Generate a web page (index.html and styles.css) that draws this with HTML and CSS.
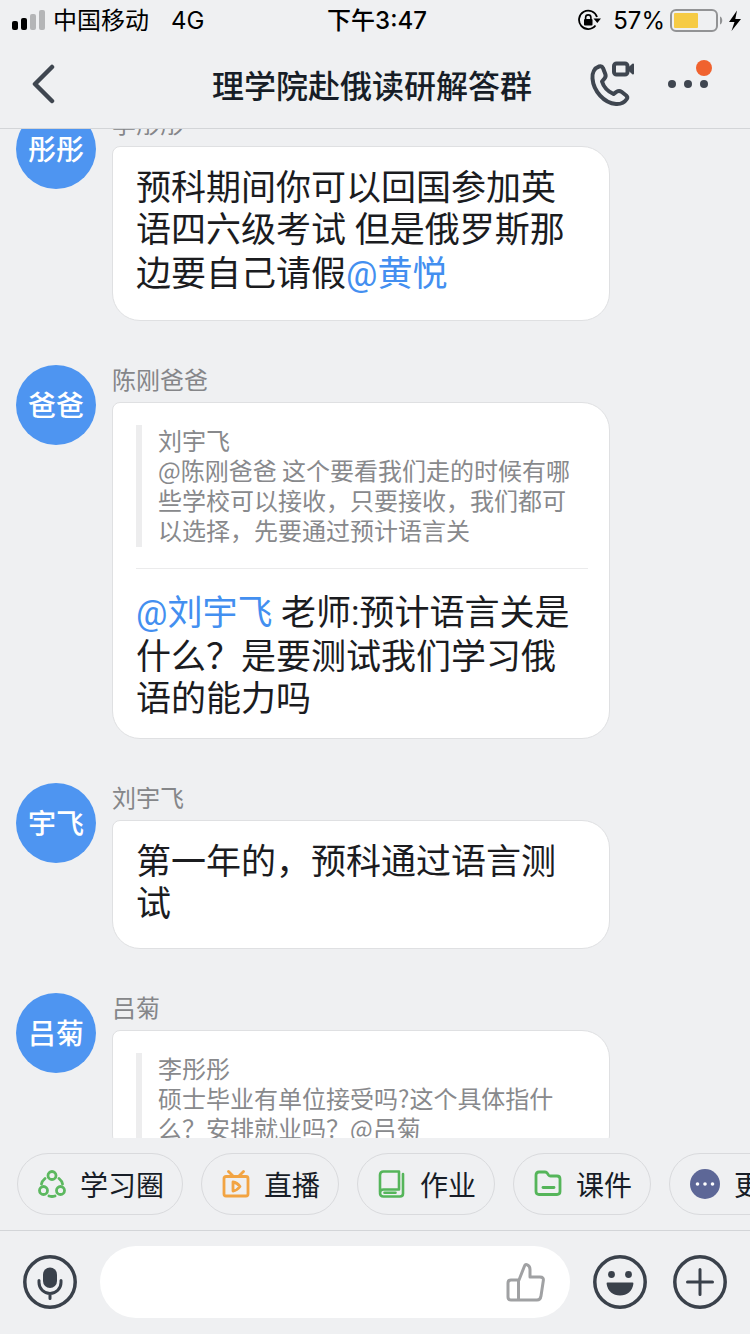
FILE: index.html
```html
<!DOCTYPE html>
<html lang="zh-CN">
<head>
<meta charset="utf-8">
<meta name="viewport" content="width=device-width, initial-scale=1">
<title>理学院赴俄读研解答群</title>
<link rel="stylesheet" href="styles.css">
</head>
<body>
<div class="app">
  <div class="status">
    <div class="status-left">
      <svg class="signal" viewBox="0 0 34 22" width="34" height="22" aria-hidden="true">
        <rect x="0" y="12" width="6" height="9" rx="2" fill="#000"/>
        <rect x="9" y="9" width="6" height="12" rx="2" fill="#000"/>
        <rect x="18" y="5" width="6" height="16" rx="2" fill="#b4b5b7"/>
        <rect x="27" y="1" width="6" height="20" rx="2" fill="#b4b5b7"/>
      </svg>
      <span class="status-text carrier">中国移动</span>
      <span class="status-text">4G</span>
    </div>
    <div class="status-text clock">下午3:47</div>
    <div class="status-right">
      <svg class="lock" viewBox="0 0 24 22" width="24" height="22" aria-hidden="true">
        <path d="M20 8A9.200 9.200 0 1 0 18.500 16.500" fill="none" stroke="#000" stroke-width="1.800"/>
        <path d="M16.500 9.500h7.500l-3.700 4.500z" fill="#000"/>
        <rect x="7" y="10" width="8.500" height="6.500" rx="1" fill="#000"/>
        <path d="M8.600 10.500V8.500a2.650 2.650 0 0 1 5.300 0v2" fill="none" stroke="#000" stroke-width="1.600"/>
      </svg>
      <span class="status-text percent">57%</span>
      <svg class="battery" viewBox="0 0 72 24" width="72" height="24" aria-hidden="true">
        <rect x="1" y="2" width="46" height="21" rx="5" fill="none" stroke="#929395" stroke-width="2"/>
        <rect x="4" y="5" width="24" height="15" rx="1" fill="#f6cb45"/>
        <path d="M50 8.500c3 1 3 7 0 8z" fill="#929395"/>
        <path d="M67 2.500L59 14h5.500l-3 9L71 11h-5.700z" fill="#000"/>
      </svg>
    </div>
  </div>

  <header class="nav">
    <button class="icon-button back" aria-label="返回">
      <svg viewBox="0 0 24 40" width="24" height="40"><path d="M20 3L3 20l17 17" fill="none" stroke="#3f4650" stroke-width="4.500" stroke-linecap="round" stroke-linejoin="round"/></svg>
    </button>
    <h1 class="title">理学院赴俄读研解答群</h1>
    <div class="nav-actions">
      <button class="icon-button" aria-label="通话">
        <svg viewBox="0 0 46 46" width="46" height="46" fill="none" stroke="#3f4650" stroke-width="4" stroke-linejoin="round" stroke-linecap="round">
          <path d="M9 5.500C4.500 7 2 12 2.500 17.500 3.500 30 14 42 26 43c4.500.3 8.500-1.500 10.800-5 .8-1.300.5-2.500-.6-3.500l-4.700-3.700c-1.500-1.100-3.200-1.100-4.700-.1L23.500 33C18 30.500 13.500 25.500 12 20.500l2.500-3c1.200-1.400 1.500-2.700.8-4.500L13 7C12.200 5.300 10.800 4.900 9 5.500z"/>
          <rect x="24" y="2.500" width="13.500" height="11" rx="2.500"/>
          <path d="M38 8l5-4.500v9z" fill="#3f4650" stroke-width="2"/>
        </svg>
      </button>
      <button class="icon-button" aria-label="更多选项">
        <svg viewBox="0 0 46 50" width="46" height="50">
          <g fill="#3f4650"><circle cx="6" cy="25" r="4"/><circle cx="22" cy="25" r="4"/><circle cx="38" cy="25" r="4"/></g>
          <circle cx="38" cy="9" r="8" fill="#f0622f"/>
        </svg>
      </button>
    </div>
  </header>

  <main class="chat">
    <div class="messages">
      <article class="message">
        <div class="avatar">彤彤</div>
        <div class="content">
          <div class="sender">李彤彤</div>
          <div class="bubble"><p class="text">预科期间你可以回国参加英语四六级考试 但是俄罗斯那边要自己请假<a class="mention" href="#">@黄悦</a></p></div>
        </div>
      </article>
      <article class="message">
        <div class="avatar">爸爸</div>
        <div class="content">
          <div class="sender">陈刚爸爸</div>
          <div class="bubble bubble-reply">
            <blockquote class="quote"><div>刘宇飞</div><div>@陈刚爸爸 这个要看我们走的时候有哪些学校可以接收，只要接收，我们都可以选择，先要通过预计语言关</div></blockquote>
            <p class="text"><a class="mention" href="#">@刘宇飞</a> 老师:预计语言关是什么？是要测试我们学习俄语的能力吗</p>
          </div>
        </div>
      </article>
      <article class="message">
        <div class="avatar">宇飞</div>
        <div class="content">
          <div class="sender">刘宇飞</div>
          <div class="bubble"><p class="text">第一年的，预科通过语言测试</p></div>
        </div>
      </article>
      <article class="message">
        <div class="avatar">吕菊</div>
        <div class="content">
          <div class="sender">吕菊</div>
          <div class="bubble bubble-reply">
            <blockquote class="quote"><div>李彤彤</div><div>硕士毕业有单位接受吗?这个具体指什么？安排就业吗？@吕菊</div></blockquote>
          </div>
        </div>
      </article>
    </div>
  </main>

  <nav class="chips">
    <button class="chip">
      <svg viewBox="0 0 28 28" width="28" height="28" fill="none" stroke="#5cb85f" stroke-width="2.800" stroke-linecap="round">
        <circle cx="14" cy="5.500" r="4"/><circle cx="5.500" cy="20.500" r="4"/><circle cx="22.500" cy="20.500" r="4"/>
        <path d="M7 8.500Q4 11 3.500 14M21 8.500Q24 11 24.500 14M11 26q3 1 6 0"/>
      </svg>学习圈</button>
    <button class="chip">
      <svg viewBox="0 0 28 28" width="28" height="28" fill="none" stroke="#f2a443" stroke-width="2.800" stroke-linecap="round" stroke-linejoin="round">
        <rect x="2" y="6.500" width="24" height="19.500" rx="2"/><path d="M6.500 1.500l4 4M21.500 1.500l-4 4"/><path d="M11 12v9q4-.5 7-4.500-3-4-7-4.500z"/>
      </svg>直播</button>
    <button class="chip">
      <svg viewBox="0 0 28 28" width="28" height="28" fill="none" stroke="#55b55a" stroke-width="2.600" stroke-linecap="round" stroke-linejoin="round">
        <path d="M2 22V5q0-3.500 3.500-3.500h15.500v18H5.500q-3.500 0-3.500 3.500t3.500 3.500H22q3 0 3-3V4"/><path d="M6.500 22.800h11"/>
      </svg>作业</button>
    <button class="chip">
      <svg viewBox="0 0 28 28" width="28" height="28" fill="none" stroke="#55b55a" stroke-width="2.800" stroke-linecap="round" stroke-linejoin="round">
        <path d="M5 2h6q1.500 0 2.500 1.500l1 1.500q.7 1 2 1H23q3 0 3 3v12.500q0 3-3 3H5q-3 0-3-3V5q0-3 3-3z"/><path d="M9 17.500h11"/>
      </svg>课件</button>
    <button class="chip">
      <svg class="more" viewBox="0 0 30 30" width="30" height="30"><circle cx="15" cy="15" r="15" fill="#5d6797"/><g fill="#fff"><circle cx="7.500" cy="15" r="1.800"/><circle cx="15" cy="15" r="1.800"/><circle cx="22.500" cy="15" r="1.800"/></g></svg>更多</button>
  </nav>

  <form class="composer">
    <button type="button" class="icon-button" aria-label="语音">
      <svg viewBox="0 0 54 54" width="54" height="54" fill="none" stroke="#3a414b" stroke-width="3.500" stroke-linecap="round">
        <circle cx="27" cy="27" r="25.200"/><rect x="20" y="12.500" width="14" height="20.500" rx="7" fill="#3a414b" stroke="none"/>
        <path stroke-width="3" d="M16 25.500v2a11 11 0 0 0 22 0v-2M27 38.500v5"/>
      </svg>
    </button>
    <div class="field">
      <input class="field-input" type="text" aria-label="消息">
      <button type="button" class="icon-button" aria-label="点赞">
        <svg viewBox="0 0 40 40" width="40" height="40" fill="none" stroke="#a0a1a3" stroke-width="3" stroke-linejoin="round">
          <path d="M13 18l5.500-14q.8-2 2.800-1.200Q24 4 24 7.500V15h10q4 0 3.300 3.800L35 34q-.6 4-4 4H5q-3 0-3-3V21q0-3 3-3z"/><path d="M12.500 18v20"/>
        </svg>
      </button>
    </div>
    <div class="composer-actions">
      <button type="button" class="icon-button" aria-label="表情">
        <svg viewBox="0 0 54 54" width="54" height="54"><circle cx="27" cy="27" r="25.200" fill="none" stroke="#3a414b" stroke-width="3.500"/><g fill="#3a414b"><circle cx="18.500" cy="19.500" r="3.400"/><circle cx="35.500" cy="19.500" r="3.400"/><path d="M14.500 27.500h25q1 0 .9 1.200C39.500 36 34 40.500 27 40.500S14.500 36 13.600 28.700q-.1-1.200.9-1.200z"/></g></svg>
      </button>
      <button type="button" class="icon-button" aria-label="添加">
        <svg viewBox="0 0 54 54" width="54" height="54" fill="none" stroke="#3a414b" stroke-width="3.500" stroke-linecap="round"><circle cx="27" cy="27" r="25.200"/><path stroke-width="3" d="M27 14.500v25M14.500 27h25"/></svg>
      </button>
    </div>
  </form>
</div>
</body>
</html>
```
FILE: styles.css
```css
* {
  box-sizing: border-box;
}

body {
  margin: 0;
  background: #eff0f2;
  color: #1b1c1f;
  font-family: "Noto Sans CJK SC", sans-serif;
}

button,
input {
  margin: 0;
  padding: 0;
  border: 0;
  background: none;
  color: inherit;
  font: inherit;
}

svg {
  display: block;
  flex: none;
}

.app {
  display: flex;
  flex-direction: column;
  height: 100vh;
  overflow: hidden;
}

.status {
  display: grid;
  grid-template-columns: 1fr auto 1fr;
  align-items: center;
  height: 40px;
  padding: 0 8px 0 12px;
  color: #000;
  font-family: Inter, "Noto Sans CJK SC", sans-serif;
  font-size: 24px;
  line-height: 38px;
}

.status-text {
  padding-top: 2px;
}

.status-left,
.status-right {
  display: flex;
  align-items: center;
}

.status-right {
  justify-content: flex-end;
}

.carrier {
  margin: 0 22px 0 7px;
}

.clock {
  font-weight: 500;
}

.percent {
  margin: 0 5px 0 12px;
}

.icon-button {
  display: block;
  flex: none;
  cursor: pointer;
}

.nav {
  display: grid;
  grid-template-columns: 1fr auto 1fr;
  align-items: center;
  height: 89px;
  padding: 0 38px 0 32px;
  border-bottom: 1px solid #d3d5d8;
}

.back {
  justify-self: start;
}

.title {
  margin: 0;
  color: #171d27;
  font-size: 32px;
  font-weight: 500;
  line-height: 48px;
}

.nav-actions {
  display: flex;
  align-items: center;
  justify-content: flex-end;
  gap: 30px;
}

.chat {
  flex: 1;
  min-height: 0;
  overflow: hidden;
}

.messages {
  display: flex;
  flex-direction: column;
  gap: 44px;
  margin-top: -20px;
  padding: 0 16px;
}

.message {
  display: flex;
  align-items: flex-start;
  gap: 16px;
}

.avatar {
  flex: none;
  width: 80px;
  height: 80px;
  border-radius: 50%;
  background: #4e95f1;
  color: #fff;
  font-size: 28px;
  font-weight: 500;
  line-height: 78px;
  text-align: center;
}

.content {
  width: 498px;
}

.sender {
  margin-bottom: 9px;
  color: #858689;
  font-size: 24px;
  line-height: 28px;
}

.bubble {
  padding: 21px 21px 22px 23px;
  border: 1px solid #dfe0e2;
  border-radius: 8px 28px 28px 28px;
  background: #fff;
}

.bubble-reply {
  padding-top: 22px;
  padding-bottom: 17px;
}

.text {
  margin: 0;
  font-family: Roboto, "Noto Sans CJK SC", sans-serif;
  font-size: 35px;
  line-height: 42px;
}

.mention {
  display: inline-block;
  color: #438ff0;
  line-height: 46px;
  text-decoration: none;
}

.quote {
  margin: 0;
  padding: 0 0 2px 16px;
  border-left: 6px solid #ededee;
  color: #88898c;
  font-size: 24px;
  line-height: 30px;
}

.quote + .text {
  margin-top: 21px;
  padding-top: 22px;
  border-top: 1px solid #ebebec;
}

.chips {
  display: flex;
  flex: none;
  gap: 18px;
  padding: 15px 0 15px 17px;
  border-bottom: 1px solid #d3d5d8;
  overflow: hidden;
}

.chip {
  display: flex;
  flex: none;
  align-items: center;
  gap: 14px;
  height: 62px;
  padding: 0 18px 0 20px;
  border: 1px solid #d9dadd;
  border-radius: 31px;
  color: #171d27;
  font-size: 28px;
  line-height: 40px;
  cursor: pointer;
}

.composer {
  display: grid;
  flex: none;
  grid-template-columns: auto minmax(0, 1fr) auto;
  align-items: center;
  gap: 23px;
  padding: 15px 23px 16px;
}

.field {
  display: flex;
  align-items: center;
  height: 72px;
  padding: 0 24px 0 32px;
  border-radius: 36px;
  background: #fff;
}

.field-input {
  flex: 1;
  min-width: 0;
  height: 72px;
  outline: 0;
  font-size: 32px;
}

.composer-actions {
  display: grid;
  grid-template-columns: 54px 54px;
  gap: 26px;
}
```
